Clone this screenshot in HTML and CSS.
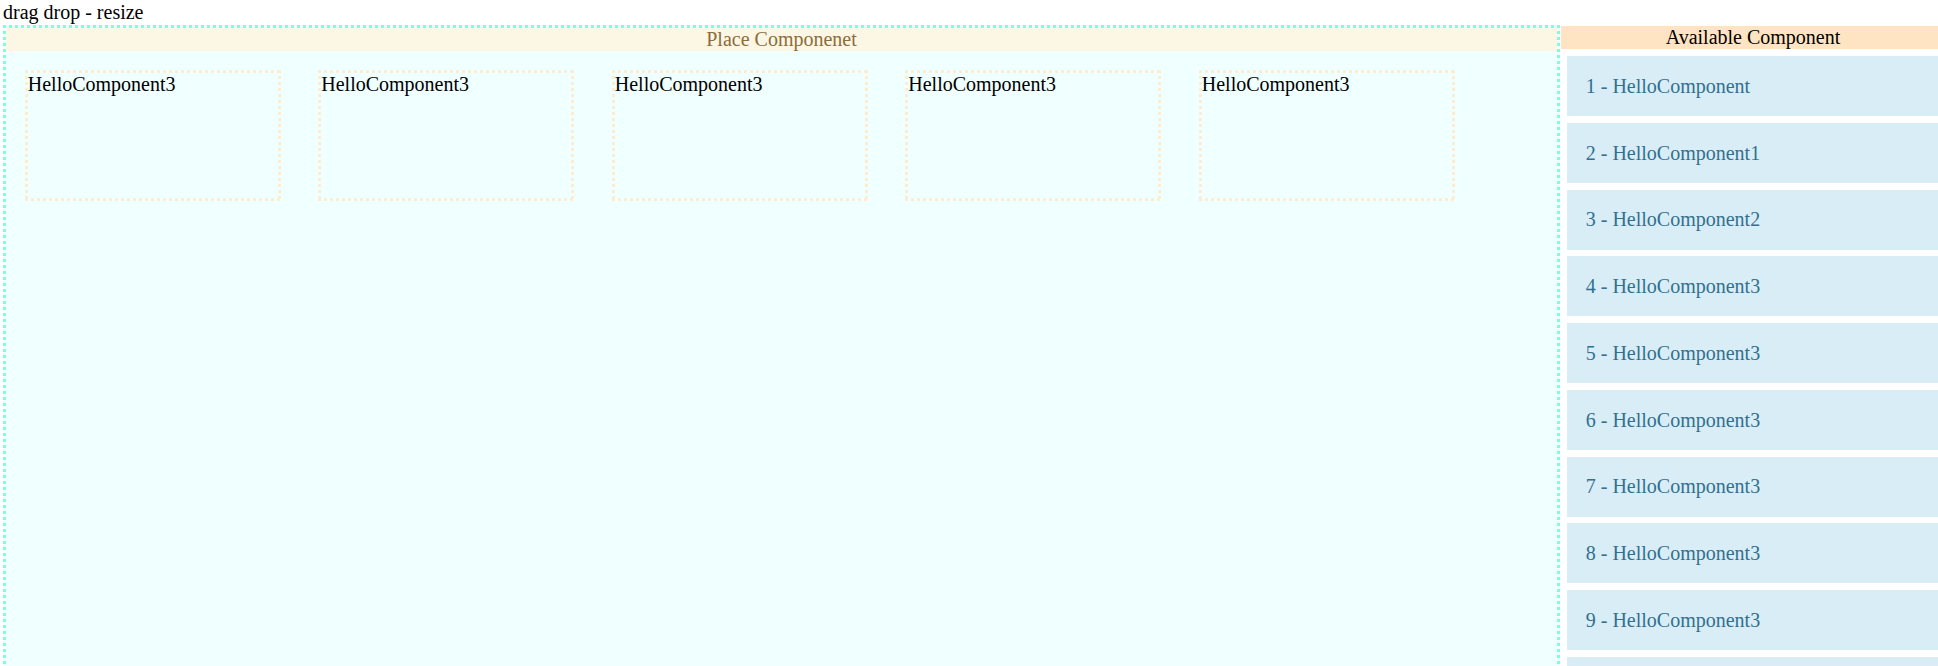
FILE: index.html
```html
<!DOCTYPE html>
<html>
<head>
<meta charset="utf-8">
<title>drag drop - resize</title>
<link rel="stylesheet" href="styles.css">
</head>
<body>
<div class="page">
  <div class="title">drag drop - resize</div>
  <div class="layout">
    <div class="board">
      <div class="board-head">Place Componenet</div>
      <div class="board-area">
        <div class="card">HelloComponent3</div>
        <div class="card">HelloComponent3</div>
        <div class="card">HelloComponent3</div>
        <div class="card">HelloComponent3</div>
        <div class="card">HelloComponent3</div>
      </div>
    </div>
    <div class="side">
      <div class="side-head">Available Component</div>
      <div class="list">
        <div class="item">1 - HelloComponent</div>
        <div class="item">2 - HelloComponent1</div>
        <div class="item">3 - HelloComponent2</div>
        <div class="item">4 - HelloComponent3</div>
        <div class="item">5 - HelloComponent3</div>
        <div class="item">6 - HelloComponent3</div>
        <div class="item">7 - HelloComponent3</div>
        <div class="item">8 - HelloComponent3</div>
        <div class="item">9 - HelloComponent3</div>
        <div class="item">10 - HelloComponent3</div>
        <div class="item">11 - HelloComponent3</div>
      </div>
    </div>
  </div>
</div>
</body>
</html>
```
FILE: styles.css
```css
html, body {
  margin: 0;
  padding: 0;
  overflow: hidden;
  background: #ffffff;
}
body {
  font-family: "Liberation Serif", "Times New Roman", serif;
  font-size: 20px;
  color: #000;
}
.page {
  padding: 1px 0 0 3px;
  width: 1960px;
}
.title {
  line-height: 23px;
  height: 23px;
  margin-bottom: 1px;
}
.layout {
  display: flex;
  align-items: flex-start;
}
.board {
  box-sizing: border-box;
  width: 1557px;
  min-height: 760px;
  padding: 3px;
  flex: none;
  background:
    repeating-linear-gradient(90deg, #7fffd4 0 3px, transparent 3px 6px) left top / 100% 3px no-repeat,
    repeating-linear-gradient(90deg, #7fffd4 0 3px, transparent 3px 6px) left bottom / 100% 3px no-repeat,
    repeating-linear-gradient(180deg, #7fffd4 0 3px, transparent 3px 6px) left top / 3px 100% no-repeat,
    repeating-linear-gradient(180deg, #7fffd4 0 3px, transparent 3px 6px) right top / 3px 100% no-repeat,
    #f0ffff;
}
.board-head {
  height: 23px;
  line-height: 23px;
  background: #fcf6e4;
  color: #8a6d3b;
  text-align: center;
}
.board-area {
  display: flex;
  flex-wrap: wrap;
  align-items: flex-start;
}
.card {
  box-sizing: border-box;
  width: 256px;
  height: 131px;
  margin: 18.75px;
  padding: 3px;
  line-height: 23px;
  background:
    repeating-linear-gradient(90deg, #ffebcd 0 3px, transparent 3px 6px) left top / 100% 3px no-repeat,
    repeating-linear-gradient(90deg, #ffebcd 0 3px, transparent 3px 6px) left bottom / 100% 3px no-repeat,
    repeating-linear-gradient(180deg, #ffebcd 0 3px, transparent 3px 6px) left top / 3px 100% no-repeat,
    repeating-linear-gradient(180deg, #ffebcd 0 3px, transparent 3px 6px) right top / 3px 100% no-repeat;
}
.side {
  flex: none;
  width: 384px;
  margin-left: 1px;
  margin-top: 1px;
}
.side-head {
  height: 23px;
  line-height: 23px;
  background: #ffe4c4;
  text-align: center;
}
.list {
  padding: 7px 0 0 6px;
}
.item {
  height: 60px;
  box-sizing: border-box;
  padding: 18.75px 18.75px;
  line-height: 22.5px;
  background: #d9edf7;
  color: #31708f;
  margin-bottom: 6.75px;
}
```
